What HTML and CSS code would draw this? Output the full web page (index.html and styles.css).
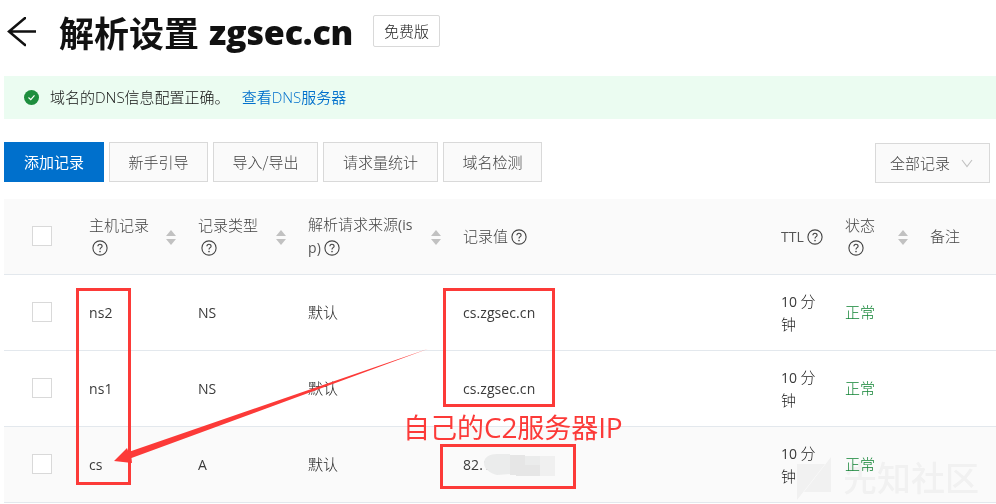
FILE: index.html
```html
<!DOCTYPE html>
<html lang="zh-CN">
<head>
<meta charset="utf-8">
<title>解析设置 zgsec.cn</title>
<link rel="stylesheet" href="styles.css">
</head>
<body>
<svg width="0" height="0" class="defs">
  <symbol id="help" viewBox="0 0 16 16"><circle cx="8" cy="8" r="7.1" fill="none" stroke="currentColor" stroke-width="1.1"/><path d="M5.9 6.3C5.9 3.6 10.1 3.6 10.1 6.2C10.1 7.7 8 7.7 8 9.5" fill="none" stroke="currentColor" stroke-width="1.1"/><circle cx="8" cy="11.6" r=".8" fill="currentColor"/></symbol>
  <symbol id="sort" viewBox="0 0 10 15"><path d="M5 0L10 6H0zM0 9H10L5 15z" fill="#c1c1c1"/></symbol>
</svg>
<header class="title-bar">
  <svg class="back" viewBox="0 0 30 30"><path d="M29 14.500H2M19 1H18L2 14.500L18 28H19" fill="none" stroke="#111" stroke-width="2.5"/></svg>
  <h1><span>解析设置</span><span class="domain">zgsec.cn</span></h1>
  <span class="tag">免费版</span>
</header>
<div class="notice">
  <svg class="ok" viewBox="0 0 15 15"><circle cx="7.5" cy="7.5" r="7.5" fill="#1e8e3e"/><path d="M4.5 7.5L6.8 9.7L10.5 5.4" fill="none" stroke="#fff" stroke-width="1.2"/></svg>
  <span>域名的<span class="dns">DNS</span>信息配置正确。</span>
  <a class="link">查看<span class="dns">DNS</span>服务器</a>
</div>
<div class="toolbar">
  <button class="btn primary w100">添加记录</button>
  <button class="btn w99">新手引导</button>
  <button class="btn w105">导入/导出</button>
  <button class="btn w115">请求量统计</button>
  <button class="btn w99">域名检测</button>
  <div class="select"><span>全部记录</span><svg viewBox="0 0 12 9"><path d="M1 1L6 7.5L11 1" fill="none" stroke="#c1c1c1" stroke-width="1.1"/></svg></div>
</div>
<main class="table">
  <div class="row head">
    <div><i class="box"></i></div>
    <div><span>主机记录<br><svg class="help indent"><use href="#help"/></svg></span><svg class="sort"><use href="#sort"/></svg></div>
    <div><span>记录类型<br><svg class="help indent"><use href="#help"/></svg></span><svg class="sort"><use href="#sort"/></svg></div>
    <div><span>解析请求来源<span class="lat">(is<br>p)</span><svg class="help near"><use href="#help"/></svg></span><svg class="sort"><use href="#sort"/></svg></div>
    <div><span>记录值<svg class="help near"><use href="#help"/></svg></span></div>
    <div><span><span class="lat">TTL</span><svg class="help near"><use href="#help"/></svg></span></div>
    <div><span>状态<br><svg class="help indent"><use href="#help"/></svg></span><svg class="sort"><use href="#sort"/></svg></div>
    <div>备注</div>
  </div>
  <div class="row">
    <div><i class="box"></i></div><div class="lat">ns2</div><div class="lat">NS</div><div>默认</div><div class="lat">cs.zgsec.cn</div>
    <div><span><span class="lat">10</span> 分<br>钟</span></div><div class="good">正常</div><div></div>
  </div>
  <div class="row">
    <div><i class="box"></i></div><div class="lat">ns1</div><div class="lat">NS</div><div>默认</div><div class="lat">cs.zgsec.cn</div>
    <div><span><span class="lat">10</span> 分<br>钟</span></div><div class="good">正常</div><div></div>
  </div>
  <div class="row last">
    <div><i class="box"></i></div><div class="lat">cs</div><div class="lat">A</div><div>默认</div><div class="lat">82.1</div>
    <div><span><span class="lat">10</span> 分<br>钟</span></div><div class="good">正常</div><div></div>
  </div>
</main>
<div class="watermark"><svg viewBox="0 0 36 44"><path d="M0 7H28L0 43zM34 0V35H7z" fill="#f6f6f6"/></svg><span>先知社区</span></div>
<svg class="marks" viewBox="0 0 996 504">
  <path d="M484 463C484 457 490 454 497 454L510 454V455H525V456H555V476H516V475H510V474L497 475C490 473 484 469 484 463z" fill="#ebecec"/>
  <path d="M510 455H525V465H540V476H516V475H510z" fill="#e6e6e6"/>
  <path d="M540 456H555V476H540z" fill="#f0f0f0"/>
  <g fill="none" stroke="#fc3a38" stroke-width="3"><rect x="77.5" y="289.500" width="52" height="194"/><rect x="444.500" y="289.500" width="109" height="116"/><rect x="441.500" y="445.500" width="133" height="42"/></g>
  <path d="M114 461L127 448L128.500 452L429 348.500L131.500 458L132 463z" fill="#fc3a38"/>
</svg>
<div class="caption">自己的<span class="cap-lat">C2</span>服务器<span class="cap-lat">IP</span></div>
</body>
</html>
```
FILE: styles.css
```css
* { box-sizing: border-box; }
body {
  margin: 0;
  width: 996px;
  height: 504px;
  overflow: hidden;
  position: relative;
  background: #fff;
  color: #222;
  font: 300 15px/22px "Noto Sans CJK SC", sans-serif;
}
svg { display: block; flex: none; }
.defs { position: absolute; }
.lat, .dns { font-family: "Open Sans", "Noto Sans CJK SC", sans-serif; font-size: 14px; font-weight: 400; letter-spacing: 0.08px; }
.lat { color: #3a3a3a; }
.dns { font-weight: 300; font-size: 15px; letter-spacing: 0; }

.title-bar { display: flex; align-items: flex-start; height: 76px; padding-left: 7px; }
.back { width: 30px; height: 30px; margin-top: 17px; }
h1 { display: flex; margin: 7px 0 0 22px; width: 314px; gap: 10px; color: #111; font-size: 35px; line-height: 50px; font-weight: 700; white-space: nowrap; }
.domain { font-family: "Open Sans", sans-serif; font-size: 34px; font-weight: 800; letter-spacing: -0.2px; }
.tag { width: 67px; height: 32px; margin-top: 15px; border: 1px solid #d9d9d9; border-radius: 2px; text-align: center; line-height: 29px; }

.notice { display: flex; align-items: center; height: 43px; margin-left: 4px; padding: 0 0 1px 20px; background: #ebfcf1; color: #111; }
.ok { width: 15px; height: 15px; margin: 1px 11px 0 0; }
.link { margin-left: 12px; color: #0070cc; font-weight: 350; }

.toolbar { display: flex; gap: 5px; height: 80px; padding: 23px 6px 0 4px; }
.btn { height: 40px; padding: 0; border: 1px solid #d9d9d9; background: #fafafa; color: #444; font: inherit; line-height: 38px; }
.primary { border-color: #0070cc; background: #0070cc; color: #fff; font-weight: 400; }
.w99 { width: 99px; }
.w100 { width: 100px; }
.w105 { width: 105px; }
.w115 { width: 115px; }
.select { display: flex; align-items: center; justify-content: space-between; width: 115px; height: 40px; margin: 1px 0 0 auto; padding: 0 16px 0 14px; border: 1px solid #d9d9d9; background: #fafafa; color: #444; }
.select svg { width: 12px; height: 9px; }

.table { margin-left: 4px; }
.row { display: grid; grid-template-columns: 85px 109px 110px 155px 318px 64px 85px 66px; height: 76px; padding-bottom: 1px; border-bottom: 1px solid #e3e8ed; }
.row > div { display: flex; align-items: center; min-width: 0; white-space: nowrap; }
.row > div:first-child { padding: 0 0 1px 28px; }
.row > .lat { padding-top: 1px; }
.head, .last { background: #fafafa; }
.head { color: #444; }
.head .lat { color: #555; }
.box { width: 20px; height: 20px; border: 1px solid #d9d9d9; background: #fff; }
.help { display: inline-block; width: 16px; height: 16px; vertical-align: -3px; }
.indent { margin-left: 3px; }
.near { margin-left: 3px; }
.sort { width: 10px; height: 15px; margin: 3px 22px 0 auto; }
.good { color: #128434; }

.marks { position: absolute; inset: 0; width: 996px; height: 504px; }
.caption { position: absolute; left: 403px; top: 408px; color: #fc3a38; font-size: 27px; font-weight: 400; line-height: 38px; white-space: nowrap; }
.cap-lat { font-family: "Open Sans", sans-serif; font-size: 28px; letter-spacing: -0.2px; }
.watermark { position: absolute; left: 797px; top: 457px; display: flex; gap: 10px; color: #f6f6f6; font-size: 34px; font-weight: 500; line-height: 40px; mix-blend-mode: multiply; white-space: nowrap; }
.watermark svg { width: 36px; height: 44px; }
```
